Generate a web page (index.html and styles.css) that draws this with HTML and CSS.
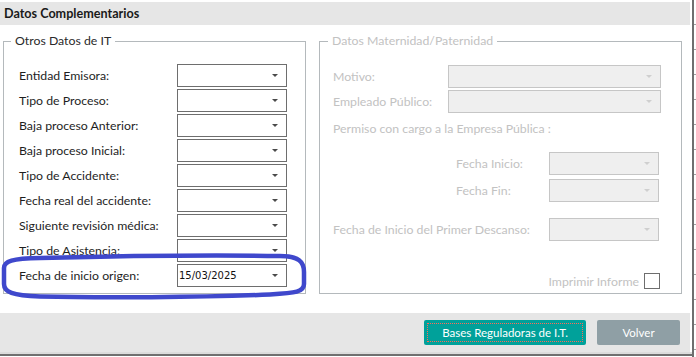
FILE: index.html
```html
<!DOCTYPE html>
<html lang="es">
<head>
<meta charset="utf-8">
<title>Datos Complementarios</title>
<link rel="stylesheet" href="styles.css">
</head>
<body>
<div class="window">
  <div class="header">Datos Complementarios</div>
  <div class="content">
    <fieldset class="group group-left">
      <legend>Otros Datos de IT</legend>
      <div class="rows">
        <div class="row"><span class="lbl">Entidad Emisora:</span><div class="select"><span class="val"></span><svg class="caret" width="6" height="3" viewBox="0 0 6 3"><path d="M0 0H6L3 3Z"/></svg></div></div>
        <div class="row"><span class="lbl">Tipo de Proceso:</span><div class="select"><span class="val"></span><svg class="caret" width="6" height="3" viewBox="0 0 6 3"><path d="M0 0H6L3 3Z"/></svg></div></div>
        <div class="row"><span class="lbl">Baja proceso Anterior:</span><div class="select"><span class="val"></span><svg class="caret" width="6" height="3" viewBox="0 0 6 3"><path d="M0 0H6L3 3Z"/></svg></div></div>
        <div class="row"><span class="lbl">Baja proceso Inicial:</span><div class="select"><span class="val"></span><svg class="caret" width="6" height="3" viewBox="0 0 6 3"><path d="M0 0H6L3 3Z"/></svg></div></div>
        <div class="row"><span class="lbl">Tipo de Accidente:</span><div class="select"><span class="val"></span><svg class="caret" width="6" height="3" viewBox="0 0 6 3"><path d="M0 0H6L3 3Z"/></svg></div></div>
        <div class="row"><span class="lbl">Fecha real del accidente:</span><div class="select"><span class="val"></span><svg class="caret" width="6" height="3" viewBox="0 0 6 3"><path d="M0 0H6L3 3Z"/></svg></div></div>
        <div class="row"><span class="lbl">Siguiente revisión médica:</span><div class="select"><span class="val"></span><svg class="caret" width="6" height="3" viewBox="0 0 6 3"><path d="M0 0H6L3 3Z"/></svg></div></div>
        <div class="row"><span class="lbl">Tipo de Asistencia:</span><div class="select"><span class="val"></span><svg class="caret" width="6" height="3" viewBox="0 0 6 3"><path d="M0 0H6L3 3Z"/></svg></div></div>
        <div class="row"><span class="lbl">Fecha de inicio origen:</span><div class="select"><span class="val date">15/03/2025</span><svg class="caret" width="6" height="3" viewBox="0 0 6 3"><path d="M0 0H6L3 3Z"/></svg></div></div>
      </div>
    </fieldset>
    <fieldset class="group group-right">
      <legend>Datos Maternidad/Paternidad</legend>
      <div class="rrows">
        <div class="rrow"><span class="rlbl">Motivo:</span><div class="select disabled wide"><span class="val"></span><svg class="caret" width="6" height="3" viewBox="0 0 6 3"><path d="M0 0H6L3 3Z"/></svg></div></div>
        <div class="rrow"><span class="rlbl">Empleado Público:</span><div class="select disabled wide"><span class="val"></span><svg class="caret" width="6" height="3" viewBox="0 0 6 3"><path d="M0 0H6L3 3Z"/></svg></div></div>
        <div class="permiso">Permiso con cargo a la Empresa Pública :</div>
        <div class="rrow sub"><span class="slbl">Fecha Inicio:</span><div class="select disabled"><span class="val"></span><svg class="caret" width="6" height="3" viewBox="0 0 6 3"><path d="M0 0H6L3 3Z"/></svg></div></div>
        <div class="rrow sub"><span class="slbl">Fecha Fin:</span><div class="select disabled"><span class="val"></span><svg class="caret" width="6" height="3" viewBox="0 0 6 3"><path d="M0 0H6L3 3Z"/></svg></div></div>
        <div class="rrow descanso"><span class="dlbl">Fecha de Inicio del Primer Descanso:</span><div class="select disabled"><span class="val"></span><svg class="caret" width="6" height="3" viewBox="0 0 6 3"><path d="M0 0H6L3 3Z"/></svg></div></div>
        <div class="check-row"><span class="clbl">Imprimir Informe</span><span class="checkbox"></span></div>
      </div>
    </fieldset>
  </div>
  <div class="footer">
    <button class="btn btn-primary" type="button"><span class="focus">Bases Reguladoras de I.T.</span></button>
    <button class="btn btn-secondary" type="button">Volver</button>
  </div>
  <div class="bottom-lines"></div>
</div>
<div class="edge"></div>
<div class="behind"></div>
<svg class="annot" width="696" height="357" viewBox="0 0 696 357">
  <path d="M40 258 C120 256 220 255 280 256 C299 256 304 262 304 272 L304 284 C304 292 296 293 270 294.5 C200 297.5 100 298 40 296.5 C12 295.5 4 292 4 284 L4 268 C4 261 12 258.5 40 258 Z" fill="none" stroke="#3f48cc" stroke-width="4.5" stroke-linejoin="round"/>
</svg>
</body>
</html>
```

FILE: styles.css
```css
* { box-sizing: border-box; }
html, body { margin: 0; padding: 0; }
body {
  width: 696px;
  height: 357px;
  overflow: hidden;
  background: #fff;
  display: flex;
  position: relative;
  font-family: Lato, "Open Sans", sans-serif;
  font-size: 12.3px;
  color: #1e1e1e;
}
.window {
  width: 692px;
  height: 357px;
  display: flex;
  flex-direction: column;
}
.header {
  margin-top: 2px;
  width: 690px;
  height: 23px;
  background: #e6e6e6;
  font-weight: 700;
  font-size: 12.6px;
  line-height: 23px;
  padding-left: 4px;
  color: #1a1a1a;
}
.content {
  height: 288px;
  display: flex;
  align-items: flex-start;
  gap: 13px;
  padding: 8px 0 0 3px;
}
.group {
  margin: 0;
  border: 1px solid #b4b9bc;
  min-width: 0;
}
.group legend {
  font-size: 12.3px;
  line-height: 16px;
  padding: 0 4px;
}
.group-left {
  width: 303px;
  padding: 15px 0 6px 15px;
}
.group-left legend {
  margin-left: -8px;
  color: #2a2a2a;
}
.group-right {
  width: 363px;
  height: 261px;
  padding: 16px 0 0 13px;
  color: #c2c2c2;
}
.group-right legend {
  margin-left: -5px;
  color: #c2c2c2;
}
.rows {
  display: flex;
  flex-direction: column;
  gap: 2px;
}
.row {
  display: flex;
  align-items: center;
  height: 23px;
}
.lbl {
  width: 158px;
  line-height: 16px;
}
.select {
  width: 110px;
  height: 23px;
  border: 1px solid #6e6e6e;
  background: #fff;
  display: flex;
  align-items: center;
  justify-content: space-between;
  padding: 0 8px 0 1px;
}
.select .caret { fill: #4a4a4a; flex: none; }
.val { line-height: 16px; }
.date {
  font-family: "DejaVu Sans", Verdana, sans-serif;
  font-size: 10px;
  color: #111;
}
.select.disabled {
  background: #efefef;
  border-color: #c6c6c6;
}
.select.disabled .caret { fill: #cfcfcf; }
.select.wide { width: 213px; }
.rrows {
  display: flex;
  flex-direction: column;
}
.rrow {
  display: flex;
  align-items: center;
  height: 23px;
  margin-bottom: 2px;
}
.rlbl { width: 115px; }
.permiso {
  line-height: 16px;
  margin: 6px 0 15px;
}
.sub { padding-left: 123px; margin-bottom: 4px; }
.slbl { width: 93px; }
.descanso { margin-top: 12px; }
.dlbl { width: 216px; }
.check-row {
  margin-top: 30px;
  display: flex;
  align-items: center;
  justify-content: flex-end;
  gap: 5px;
  padding-right: 21px;
}
.checkbox {
  width: 16px;
  height: 16px;
  border: 1px solid #6e6e6e;
  background: #fff;
}
.footer {
  width: 690px;
  height: 39px;
  background: #e6e6e6;
  display: flex;
  justify-content: flex-end;
  align-items: center;
  gap: 11px;
  padding-right: 10px;
}
.btn {
  height: 25px;
  border: none;
  border-radius: 2px;
  color: #fff;
  font-family: Lato, "Open Sans", sans-serif;
  font-size: 11.5px;
  padding: 0;
  display: flex;
  align-items: center;
  justify-content: center;
}
.btn-primary {
  width: 162px;
  background: #00a19a;
  padding: 3px;
}
.btn-primary .focus {
  width: 100%;
  height: 100%;
  border: 1px dotted #ff6a5a;
  display: flex;
  align-items: center;
  justify-content: center;
}
.btn-secondary {
  width: 83px;
  background: #8f9fa5;
}
.bottom-lines {
  height: 5px;
  border-top: 2px solid #dcdcdc;
  border-bottom: 1px solid #fff;
  background: #707070;
}
.edge {
  width: 2px;
  height: 357px;
  background: #6f6f6f;
}
.behind {
  width: 2px;
  height: 357px;
  background: repeating-linear-gradient(to bottom, #fff 0, #fff 24px, #a0a0a0 24px, #a0a0a0 25px);
}
.annot {
  position: absolute;
  left: 0;
  top: 0;
  pointer-events: none;
}
```
